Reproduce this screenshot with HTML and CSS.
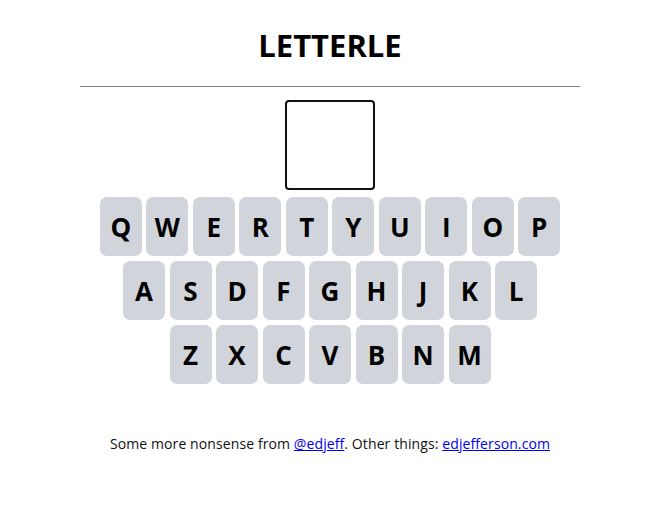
FILE: index.html
```html
<!DOCTYPE html>
<html>
<head>
<meta charset="utf-8">
<link rel="stylesheet" href="styles.css">
</head>
<body>
<div class="app">
  <h1 class="title">LETTERLE</h1>
  <hr class="rule">
  <div class="guess"></div>
  <div class="keyboard">
    <div class="row">
      <div class="key">Q</div><div class="key">W</div><div class="key">E</div><div class="key">R</div><div class="key">T</div><div class="key">Y</div><div class="key">U</div><div class="key">I</div><div class="key">O</div><div class="key">P</div>
    </div>
    <div class="row">
      <div class="key">A</div><div class="key">S</div><div class="key">D</div><div class="key">F</div><div class="key">G</div><div class="key">H</div><div class="key">J</div><div class="key">K</div><div class="key">L</div>
    </div>
    <div class="row">
      <div class="key">Z</div><div class="key">X</div><div class="key">C</div><div class="key">V</div><div class="key">B</div><div class="key">N</div><div class="key">M</div>
    </div>
  </div>
  <p class="footer">Some more nonsense from <a href="#">@edjeff</a>. Other things: <a href="#">edjefferson.com</a></p>
</div>
</body>
</html>
```
FILE: styles.css
```css
html, body {
  margin: 0;
  padding: 0;
  background: #fff;
}
body {
  font-family: "Open Sans", "Noto Sans", sans-serif;
  color: #000;
}
.app {
  display: flex;
  flex-direction: column;
  align-items: center;
  padding-top: 25px;
  padding-left: 3px;
}
.title {
  margin: 0;
  font-size: 31px;
  font-weight: 700;
  line-height: 40px;
  letter-spacing: 0;
}
.rule {
  width: 500px;
  margin: 21px 0 0 0;
  border: 0;
  border-top: 1px solid #808080;
  height: 0;
}
.guess {
  margin-top: 13px;
  width: 86px;
  height: 86px;
  border: 2px solid #111;
  border-radius: 4px;
}
.keyboard {
  margin-top: 7px;
  display: flex;
  flex-direction: column;
  align-items: center;
  gap: 5px;
}
.row {
  display: flex;
  gap: 4.5px;
}
.key {
  width: 42px;
  height: 59px;
  background: #d1d5db;
  border-radius: 7px;
  display: flex;
  align-items: center;
  justify-content: center;
  font-size: 26px;
  font-weight: 700;
}
.footer {
  margin: 50px 0 0 0;
  font-size: 14px;
  line-height: 20px;
  letter-spacing: 0.1px;
  color: #111;
}
.footer a {
  color: #0000ee;
}
```
